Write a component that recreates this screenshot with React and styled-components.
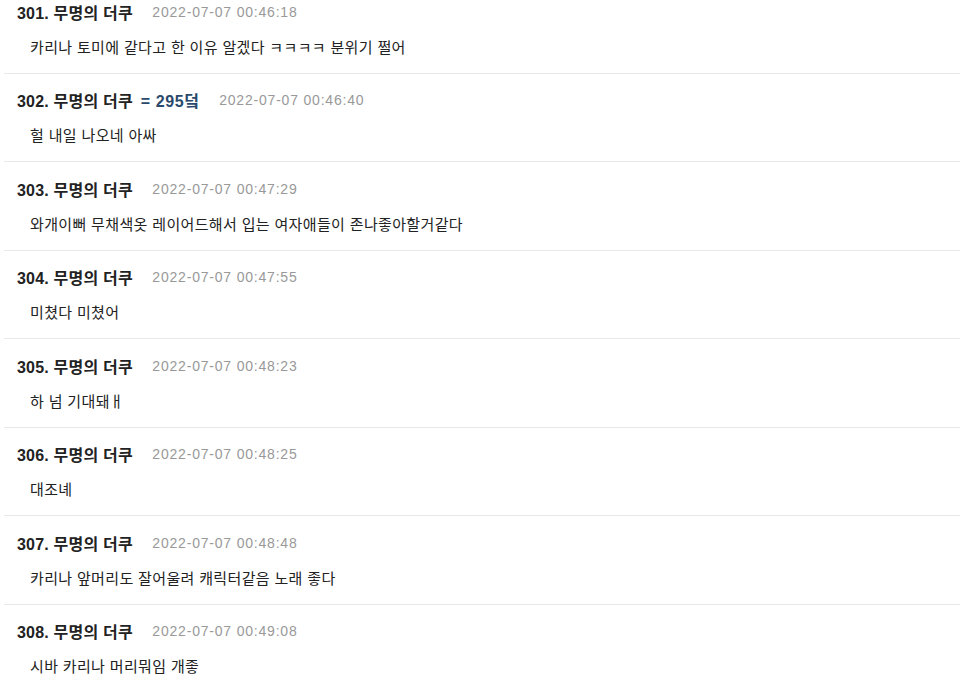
import React from 'react';
import styled, { createGlobalStyle } from 'styled-components';

const GlobalStyle = createGlobalStyle`
    html, body {
        margin: 0;
        padding: 0;
        background: #fff;
    }
    body {
        font-family: "Liberation Sans", "Noto Sans CJK KR", sans-serif;
        overflow: hidden;
    }
`;

const comments = [
    { no: 301, date: '2022-07-07 00:46:18', text: '카리나 토미에 같다고 한 이유 알겠다 ㅋㅋㅋㅋ 분위기 쩔어' },
    { no: 302, date: '2022-07-07 00:46:40', text: '헐 내일 나오네 아싸', reply: '= 295덬' },
    { no: 303, date: '2022-07-07 00:47:29', text: '와개이뻐 무채색옷 레이어드해서 입는 여자애들이 존나좋아할거같다' },
    { no: 304, date: '2022-07-07 00:47:55', text: '미쳤다 미쳤어' },
    { no: 305, date: '2022-07-07 00:48:23', text: '하 넘 기대돼ㅐ' },
    { no: 306, date: '2022-07-07 00:48:25', text: '대조녜' },
    { no: 307, date: '2022-07-07 00:48:48', text: '카리나 앞머리도 잘어울려 캐릭터같음 노래 좋다' },
    { no: 308, date: '2022-07-07 00:49:08', text: '시바 카리나 머리뭐임 개좋' },
];

const App = () => {
    return (
        <>
            <GlobalStyle />
            <CommentList>
                {comments.map((item) => (
                    <Comment key={item.no}>
                        <CommentHead>
                            <Writer>
                                {item.no}. 무명의 더쿠
                                {item.reply && <ReplyTo>{item.reply}</ReplyTo>}
                            </Writer>
                            <Date>{item.date}</Date>
                        </CommentHead>
                        <CommentBody>{item.text}</CommentBody>
                    </Comment>
                ))}
            </CommentList>
        </>
    );
};

const CommentList = styled.ul`
    list-style: none;
    margin: -15px 0 0 4px;
    padding: 0;
`;

const Comment = styled.li`
    padding: 16.5px 0 15px 13px;
    border-bottom: 1px solid #e8e8e8;
`;

const CommentHead = styled.div`
    display: flex;
    align-items: center;
    gap: 19.5px;
    height: 20px;
`;

const Writer = styled.span`
    font-size: 16px;
    font-weight: bold;
    letter-spacing: 0.2px;
    color: #222;
    white-space: pre;
`;

const ReplyTo = styled.span`
    margin-left: 8px;
    letter-spacing: 0.6px;
    color: #2a4a6c;
`;

const Date = styled.span`
    font-size: 14px;
    letter-spacing: 0.8px;
    color: #999;
`;

const CommentBody = styled.div`
    margin-top: 16px;
    padding-left: 13px;
    font-size: 15px;
    letter-spacing: 0.35px;
    line-height: 20px;
    color: #222;
`;

export default App;
